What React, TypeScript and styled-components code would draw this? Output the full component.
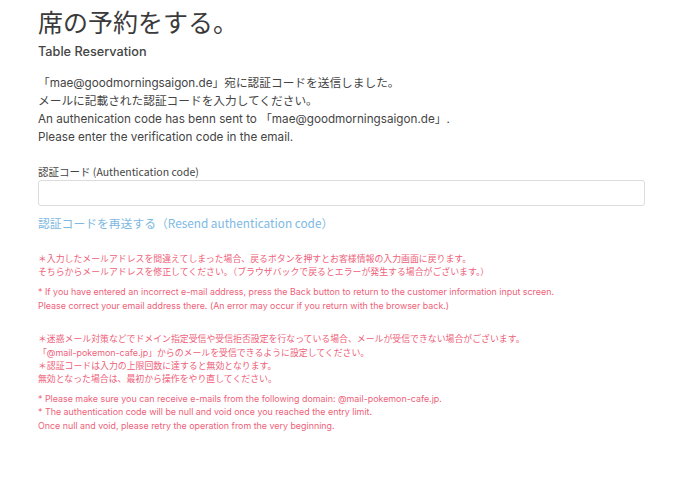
import React from "react";
import styled, { createGlobalStyle } from "styled-components";

const Global = createGlobalStyle`
  html, body { margin: 0; padding: 0; background: #fff; }
  body { font-family: Inter, "Noto Sans CJK JP", sans-serif; color: #333; }
`;

const Page = styled.div`
  padding: 5px 55px 0 38px;
  display: flex;
  flex-direction: column;
`;

const Title = styled.h1`
  margin: 0;
  font-size: 25px;
  font-weight: 400;
  line-height: 32px;
  color: #3a3a3a;
  font-family: "Noto Sans CJK JP", sans-serif;
`;

const Subtitle = styled.h2`
  margin: 6px 0 0;
  font-size: 12.7px;
  font-weight: 500;
  line-height: 18px;
  color: #444;
`;

const Intro = styled.p`
  margin: 14px 0 0;
  font-size: 11.7px;
  line-height: 17.9px;
  color: #444;
`;

const Label = styled.label`
  margin-top: 19px;
  font-size: 10.5px;
  line-height: 12px;
  color: #444;
  font-family: "Noto Sans CJK JP", sans-serif;
`;

const Input = styled.input`
  margin-top: 2px;
  height: 26px;
  box-sizing: border-box;
  width: 100%;
  border: 1px solid #dcdcdc;
  border-radius: 3px;
  background: #fff;
  outline: none;
`;

const Resend = styled.a`
  margin-top: 8px;
  font-size: 11.8px;
  line-height: 17px;
  color: #7db9e3;
  text-decoration: none;
  font-family: "Noto Sans CJK JP", sans-serif;
`;

const Note = styled.p<{ $top: number }>`
  margin: ${(p) => p.$top}px 0 0;
  font-size: 8.9px;
  line-height: 13.4px;
  color: #ee5f7a;
`;

export default function App() {
  return (
    <>
      <Global />
      <Page>
        <Title>席の予約をする。</Title>
        <Subtitle>Table Reservation</Subtitle>
        <Intro>
          「mae@goodmorningsaigon.de」宛に認証コードを送信しました。
          <br />
          メールに記載された認証コードを入力してください。
          <br />
          An authenication code has benn sent to 「mae@goodmorningsaigon.de」.
          <br />
          Please enter the verification code in the email.
        </Intro>
        <Label>認証コード (Authentication code)</Label>
        <Input type="text" />
        <Resend href="#">認証コードを再送する（Resend authentication code）</Resend>
        <Note $top={21}>
          ＊入力したメールアドレスを間違えてしまった場合、戻るボタンを押すとお客様情報の入力画面に戻ります。
          <br />
          そちらからメールアドレスを修正してください。（ブラウザバックで戻るとエラーが発生する場合がございます。）
        </Note>
        <Note $top={7}>
          * If you have entered an incorrect e-mail address, press the Back button to return to the customer information input screen.
          <br />
          Please correct your email address there. (An error may occur if you return with the browser back.)
        </Note>
        <Note $top={20}>
          ＊迷惑メール対策などでドメイン指定受信や受信拒否設定を行なっている場合、メールが受信できない場合がございます。
          <br />
          「@mail-pokemon-cafe.jp」からのメールを受信できるように設定してください。
          <br />
          ＊認証コードは入力の上限回数に達すると無効となります。
          <br />
          無効となった場合は、最初から操作をやり直してください。
        </Note>
        <Note $top={6}>
          * Please make sure you can receive e-mails from the following domain: @mail-pokemon-cafe.jp.
          <br />
          * The authentication code will be null and void once you reached the entry limit.
          <br />
          Once null and void, please retry the operation from the very beginning.
        </Note>
      </Page>
    </>
  );
}
